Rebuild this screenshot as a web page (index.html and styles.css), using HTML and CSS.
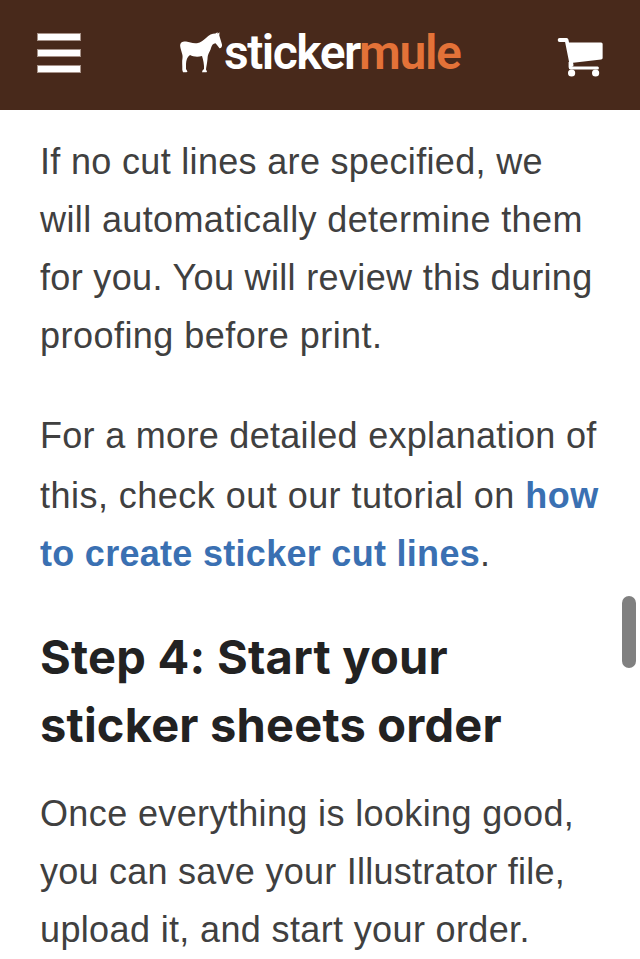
FILE: index.html
```
<!DOCTYPE html>
<html lang="en">
<head>
<meta charset="utf-8">
<meta name="viewport" content="width=device-width, initial-scale=1">
<title>Sticker sheets tutorial</title>
<link rel="stylesheet" href="styles.css">
</head>
<body>
<header class="topbar">
  <div class="menu"><span></span><span></span><span></span></div>
  <div class="logo">
    <svg class="mule" viewBox="-1 0 43 42" width="43" height="42"><path d="M0.300 14C-.5 9 3 8.300 6 8.500C10 9 12 10.700 17 10.200C21 9.600 23 7.500 26 5C29 2 32 .6 35.500 .6L37.500 -.8L37.600 .8L39.500 -.8L39.300 2.500L42 11.500C42.300 14 41 15.500 39.500 15.300L37 12L35.500 10.300C33 10.500 32 12 31 15C30 19 27.800 20 27.500 26C27 31 26.200 34 26 36.500L27 38.500L26.500 39.300H22L22.500 37.500L24 36C24.300 31 23.200 27 22 23C17 24.500 13 23.500 10 22C7 24 6.300 27 6 31L6 36L7.500 38.500L6.500 39.300H3L2.300 37C2.500 32 1.800 29 2.500 25C3.200 22 1 18 .3 14Z"/></svg>
    <div class="wordmark"><span class="white">sticker</span><span class="orange">mule</span></div>
  </div>
  <svg class="cart" viewBox="-.6 0 46 40" width="46" height="40"><path d="M2 2H9L14 27" fill="none" stroke="#fff" stroke-width="3.800" stroke-linecap="round" stroke-linejoin="round"/><path d="M10 4.500H43.500Q45 4.500 45 6V20Q45 21.300 43.500 21.500L13.500 25Z"/><path d="M11 24L14 23V28.500H40Q41.300 28.500 41.300 30T40 31.500H13Q11 31.500 11 29Z"/><circle cx="14" cy="35" r="3.600"/><circle cx="38" cy="35" r="3.600"/></svg>
</header>
<main>
  <p class="intro"><span class="l1">If no cut lines are specified, we</span><span class="l2">will automatically determine them</span><span class="l3">for you. You will review this during</span><span class="l4">proofing before print.</span></p>
  <p class="detail"><span class="l5">For a more detailed explanation of</span><span class="l6">this, check out our tutorial on <a>how</a></span><span class="l7"><a>to create sticker cut lines</a>.</span></p>
  <h2><span class="h1">Step 4: Start your</span><span class="h2">sticker sheets order</span></h2>
  <p class="finish"><span class="l8">Once everything is looking good,</span><span class="l9">you can save your Illustrator file,</span><span class="l10">upload it, and start your order.</span></p>
</main>
<div class="scrollbar"></div>
</body>
</html>
```
FILE: styles.css
```
* { box-sizing: border-box; }
body { margin: 0; height: 959px; overflow: hidden; background: #fff; color: #404040; font: 36px/58px "Liberation Sans", Arial, sans-serif; }
.topbar { height: 110px; background: #48291b; display: flex; justify-content: space-between; align-items: flex-start; padding: 33px 37px 0; }
.menu { width: 44px; display: flex; flex-direction: column; gap: 8px; }
.menu span { height: 8px; background: #fff; border: 1px solid #a79289; }
.logo { display: flex; width: 282px; margin-left: 2px; }
.mule { fill: #fff; flex: none; overflow: visible; }
.cart { fill: #fff; margin: 5px 0 0; }
.wordmark { font: 600 48px/48px Roboto, sans-serif; white-space: nowrap; margin: -4px 0 0 2px; display: flex; }
.white { color: #fff; width: 135px; letter-spacing: -1.5px; }
.orange { color: #e37238; letter-spacing: -1.3px; }
main { padding: 23px 40px 0; }
p, h2 { margin: 0; }
p span, h2 span { display: block; white-space: nowrap; }
.l1 { letter-spacing: .32px; }
.l2 { letter-spacing: .38px; }
.l3 { letter-spacing: .34px; }
.l4 { letter-spacing: .47px; }
.l5 { letter-spacing: .3px; }
.l6 { letter-spacing: .47px; }
.l7 { letter-spacing: .29px; }
.l8 { letter-spacing: .37px; }
.l9 { letter-spacing: .25px; }
.l10 { letter-spacing: .36px; }
.detail { margin-top: 42px; }
.detail .l5 { height: 60px; }
a { color: #3a70b2; font-weight: 700; }
h2 { font: 700 47px/68px Inter, sans-serif; color: #222; margin-top: 40px; }
.h1 { letter-spacing: .25px; }
.h2 { letter-spacing: .2px; }
.finish { margin-top: 26px; }
.scrollbar { position: absolute; left: 622px; top: 596px; width: 14px; height: 72px; border-radius: 7px; background: #808080; }
```
